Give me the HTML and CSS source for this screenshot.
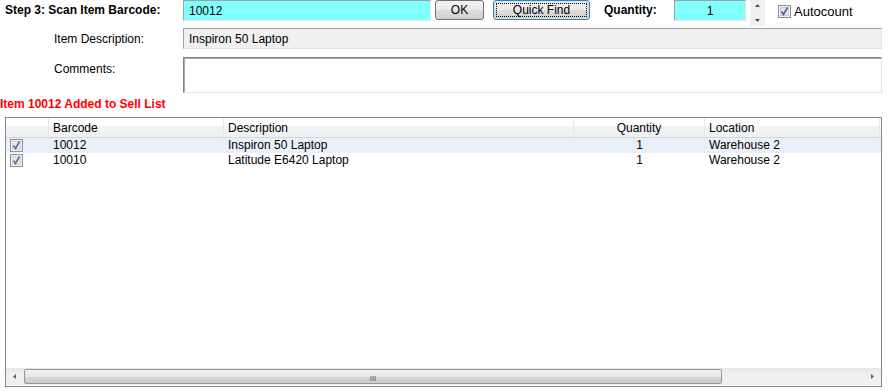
FILE: index.html
```html
<!DOCTYPE html>
<html>
<head>
  <meta charset="UTF-8">
  <title>Sell List</title>
  <link rel="stylesheet" href="styles.css">
</head>
<body>
  <div class="scan-row">
    <span class="step-label">Step 3: Scan Item Barcode:</span>
    <div class="field cyan barcode">10012</div>
    <button class="btn ok">OK</button>
    <button class="btn focused"><span class="focus-rect">Quick Find</span></button>
    <span class="qty-label">Quantity:</span>
    <div class="field cyan qty">1</div>
    <div class="spinner">
      <svg width="15" height="26" viewBox="0 0 15 26">
        <path d="M5 7 L10 7 L7.5 4 Z" fill="#4d4d4d"/>
        <path d="M5 19 L10 19 L7.5 22 Z" fill="#4d4d4d"/>
      </svg>
    </div>
    <label class="check">
      <svg class="box" width="13" height="13" viewBox="0 0 13 13">
        <rect x="0.5" y="0.5" width="12" height="12" fill="#f3f3f3" stroke="#8e8f8f"/>
        <rect x="2.5" y="2.5" width="8" height="8" fill="#e2e6ee" stroke="#c5cad3"/>
        <path d="M3.5 6.5 L5.5 9.5 L9.5 2.5" fill="none" stroke="#4a5f97" stroke-width="1.6"/>
      </svg>
      Autocount
    </label>
  </div>

  <div class="details">
    <span class="label mid">Item Description:</span>
    <div class="field readonly">Inspiron 50 Laptop</div>
    <span class="label top">Comments:</span>
    <div class="field comments"></div>
  </div>

  <div class="status">Item 10012 Added to Sell List</div>

  <div class="listview">
    <div class="lv-head lv-grid">
      <div class="col"></div>
      <div class="col">Barcode</div>
      <div class="col">Description</div>
      <div class="col center">Quantity</div>
      <div class="col">Location</div>
    </div>
    <div class="lv-body">
      <div class="lv-row lv-grid hot">
        <div class="cell"><svg width="13" height="13" viewBox="0 0 13 13"><rect x="0.5" y="0.5" width="12" height="12" fill="#f4f4f4" stroke="#8e8f8f"/><rect x="2.5" y="2.5" width="8" height="8" fill="#e4e7ec" stroke="#cfd3d9"/><path d="M3.5 6.5 L5.5 9.5 L9.5 2.5" fill="none" stroke="#5a6f9e" stroke-width="1.6"/></svg></div>
        <div class="cell">10012</div>
        <div class="cell">Inspiron 50 Laptop</div>
        <div class="cell center">1</div>
        <div class="cell">Warehouse 2</div>
      </div>
      <div class="lv-row lv-grid">
        <div class="cell"><svg width="13" height="13" viewBox="0 0 13 13"><rect x="0.5" y="0.5" width="12" height="12" fill="#f4f4f4" stroke="#8e8f8f"/><rect x="2.5" y="2.5" width="8" height="8" fill="#e4e7ec" stroke="#cfd3d9"/><path d="M3.5 6.5 L5.5 9.5 L9.5 2.5" fill="none" stroke="#5a6f9e" stroke-width="1.6"/></svg></div>
        <div class="cell">10010</div>
        <div class="cell">Latitude E6420 Laptop</div>
        <div class="cell center">1</div>
        <div class="cell">Warehouse 2</div>
      </div>
    </div>
    <div class="hscroll">
      <div class="arrow">
        <svg width="18" height="15" viewBox="0 0 18 15"><path d="M10 5 L10 10 L7 7.5 Z" fill="#606060"/></svg>
      </div>
      <div class="thumb"><span class="grip">III</span></div>
      <div class="track"></div>
      <div class="arrow">
        <svg width="18" height="15" viewBox="0 0 18 15"><path d="M8 5 L8 10 L11 7.5 Z" fill="#606060"/></svg>
      </div>
    </div>
  </div>
</body>
</html>
```

FILE: styles.css
```css
body {
  margin: 0;
  background: #fff;
  color: #000;
  font-family: "Liberation Sans", Arial, sans-serif;
  font-size: 12px;
}

/* top scan row */
.scan-row {
  display: flex;
  align-items: flex-start;
  height: 21px;
}
.step-label {
  width: 178px;
  padding-left: 5px;
  padding-top: 3px;
  font-weight: bold;
}
.field {
  box-sizing: border-box;
  height: 21px;
  border: 1px solid;
  border-color: #a0a0a0 #e3e3e3 #e3e3e3 #a0a0a0;
  padding: 3px 5px 0;
  line-height: 14px;
}
.cyan {
  background: #80ffff;
}
.barcode {
  width: 248px;
}
.btn {
  box-sizing: border-box;
  height: 20px;
  margin-left: 4px;
  padding: 0;
  border: 1px solid #707070;
  border-radius: 3px;
  background: linear-gradient(#f2f2f2, #ebebeb 50%, #dddddd 50%, #cfcfcf);
  font-family: inherit;
  font-size: 12px;
  color: #000;
}
.btn.ok {
  width: 49px;
}
.btn.focused {
  width: 97px;
  margin-left: 9px;
  border-color: #3c7fb1;
  box-shadow: inset 0 0 0 1px #bfe3f3;
}
.focus-rect {
  display: block;
  box-sizing: border-box;
  height: 14px;
  margin: 1px 2px;
  line-height: 12px;
  border: 1px dotted #000;
}
.qty-label {
  margin-left: 14px;
  width: 70px;
  padding-top: 3px;
  font-weight: bold;
}
.qty {
  width: 72px;
  text-align: center;
}
.spinner {
  width: 15px;
  height: 26px;
  margin-left: 4px;
  background: #f0f0f0;
}
.spinner svg {
  display: block;
}
.check {
  display: flex;
  align-items: center;
  gap: 3px;
  margin-left: 13px;
  padding-top: 4px;
  font-size: 13px;
}
.check .box {
  display: block;
}

/* description + comments */
.details {
  display: grid;
  grid-template-columns: 183px 699px;
  grid-template-rows: 21px 36px;
  row-gap: 8px;
  margin-top: 7px;
}
.label {
  padding-left: 54px;
}
.label.mid {
  align-self: center;
}
.label.top {
  padding-top: 5px;
}
.readonly {
  background: #f0f0f0;
}
.comments {
  height: 36px;
  border-color: #828282 #e3e3e3 #e3e3e3 #828282;
  box-shadow: inset 1px 1px 0 #a9a9a9;
}

.status {
  margin-top: 4px;
  height: 20px;
  line-height: 14px;
  color: #ff0000;
  font-weight: bold;
}

/* list view */
.listview {
  box-sizing: border-box;
  display: flex;
  flex-direction: column;
  width: 877px;
  height: 270px;
  margin-left: 5px;
  border: 1px solid #828790;
}
.lv-grid {
  display: grid;
  grid-template-columns: 43px 175px 350px 131px 175px;
}
.lv-head {
  height: 19px;
  background: linear-gradient(#ffffff, #ffffff 40%, #f3f4f6 41%, #eef0f3);
  border-bottom: 1px solid #d5d5d5;
}
.lv-head .col {
  padding: 3px 0 0 4px;
  line-height: 15px;
  border-right: 1px solid #e3e8ee;
}
.lv-head .col.center {
  padding-left: 0;
  text-align: center;
}
.lv-body {
  flex: 1;
}
.lv-row {
  height: 15px;
  line-height: 15px;
}
.lv-row.hot {
  background: #eaf0fa;
}
.cell {
  padding-left: 4px;
  white-space: nowrap;
}
.cell svg {
  display: block;
  margin: 1px 0 0 0;
}
.cell.center {
  padding-left: 0;
  text-align: center;
}

.hscroll {
  display: flex;
  height: 17px;
  margin-bottom: 1px;
  background: linear-gradient(#e6e6e6, #f0f0f0 30%, #f0f0f0);
}
.arrow {
  width: 18px;
  display: flex;
  align-items: center;
}
.thumb {
  box-sizing: border-box;
  width: 698px;
  height: 15px;
  margin-top: 1px;
  border: 1px solid #979797;
  border-radius: 2px;
  background: linear-gradient(#f3f3f3, #e8e8e8 50%, #d6d6d6 50%, #cdcdcd);
  text-align: center;
}
.grip {
  font-size: 8px;
  line-height: 13px;
  letter-spacing: 0;
  color: #555;
}
.track {
  flex: 1;
}
```
